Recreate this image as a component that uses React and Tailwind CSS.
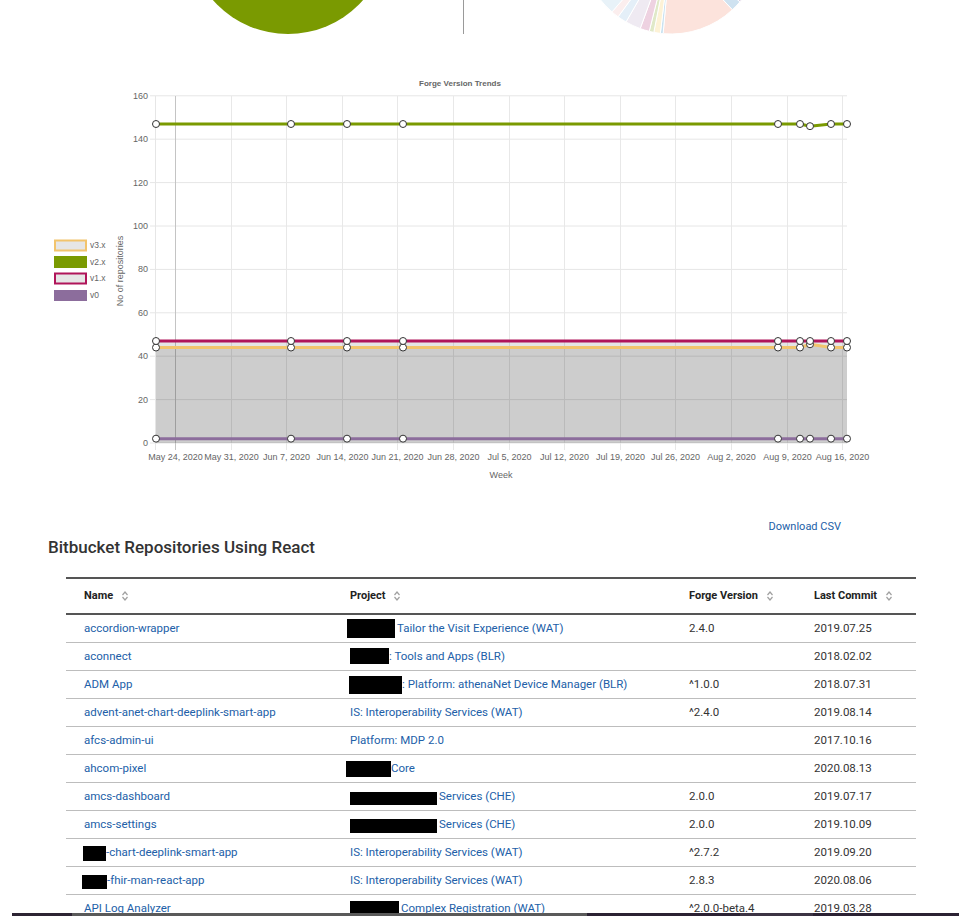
import React from "react";

const xs = [156, 291, 347, 403, 778, 800, 810, 831, 847];
const Y = (v) => 443 - v * 2.17;

const series = [
  { label: "v3.x", color: "#f2c46d", values: [44, 44, 44, 44, 44, 44, 45.5, 44, 44] },
  { label: "v2.x", color: "#7a9a01", values: [147, 147, 147, 147, 147, 147, 146, 147, 147] },
  { label: "v1.x", color: "#b0155a", values: [47, 47, 47, 47, 47, 47, 47, 47, 47] },
  { label: "v0", color: "#8c6d9c", values: [2, 2, 2, 2, 2, 2, 2, 2, 2] },
];

const weeks = [
  "May 24, 2020",
  "May 31, 2020",
  "Jun 7, 2020",
  "Jun 14, 2020",
  "Jun 21, 2020",
  "Jun 28, 2020",
  "Jul 5, 2020",
  "Jul 12, 2020",
  "Jul 19, 2020",
  "Jul 26, 2020",
  "Aug 2, 2020",
  "Aug 9, 2020",
  "Aug 16, 2020",
];

const chartFont = "'Liberation Sans', Arial, Helvetica, sans-serif";

function linePath(values) {
  return values.map((v, i) => `${i === 0 ? "M" : "L"}${xs[i]},${Y(v)}`).join(" ");
}

function areaPath(values) {
  return `${linePath(values)} L${xs[xs.length - 1]},${Y(0)} L${xs[0]},${Y(0)} Z`;
}

// pie slice between two angles (degrees, svg orientation)
function slice(cx, cy, r, a0, a1) {
  const rad = (a) => (a * Math.PI) / 180;
  const x0 = cx + r * Math.cos(rad(a0));
  const y0 = cy + r * Math.sin(rad(a0));
  const x1 = cx + r * Math.cos(rad(a1));
  const y1 = cy + r * Math.sin(rad(a1));
  const large = a1 - a0 > 180 ? 1 : 0;
  return `M${cx},${cy} L${x0},${y0} A${r},${r} 0 ${large} 1 ${x1},${y1} Z`;
}

const pieSlices = [
  [0, 30, "#e4a9c6"],
  [30, 40, "#d9cde3"],
  [40, 47, "#cfe2f0"],
  [47, 95, "#fce3dc"],
  [95, 96.8, "#c9e2f1"],
  [96.8, 101, "#fdf2d6"],
  [101, 104, "#e0e9c8"],
  [104, 110, "#eed2e1"],
  [110, 120, "#efeaf2"],
  [120, 126, "#e4eff8"],
  [126, 131, "#fbeeee"],
  [131, 180, "#e8f2f8"],
];

function TopPies() {
  return (
    <svg width="959" height="35" viewBox="0 0 959 35" className="block">
      <circle cx="288" cy="-66" r="100" fill="#7a9a01" />
      <line x1="463.5" y1="0" x2="463.5" y2="34" stroke="#9a9a9a" strokeWidth="1" />
      {pieSlices.map(([a0, a1, c], i) => (
        <path key={i} d={slice(671, -56, 90, a0, a1)} fill={c} stroke="#fff" strokeWidth="1" />
      ))}
    </svg>
  );
}

function TrendChart() {
  return (
    <svg width="959" height="455" viewBox="0 35 959 455" className="block" fontFamily={chartFont}>
      <text x="460" y="86" textAnchor="middle" fontSize="8" fontWeight="bold" fill="#666">
        Forge Version Trends
      </text>

      {/* horizontal grid + y labels */}
      {[0, 20, 40, 60, 80, 100, 120, 140, 160].map((v) => (
        <g key={v}>
          <line x1="150" y1={Y(v)} x2="847" y2={Y(v)} stroke="#e6e6e6" strokeWidth="1" />
          <text x="148" y={Y(v) + 3} textAnchor="end" fontSize="9" fill="#666">
            {v}
          </text>
        </g>
      ))}
      <line x1="155.5" y1="96" x2="155.5" y2="450" stroke="#e6e6e6" strokeWidth="1" />

      {/* vertical grid + x labels */}
      {weeks.map((w, i) => {
        const x = Math.round(175 + i * 55.6) + 0.5;
        return (
          <g key={w}>
            <line x1={x} y1="96" x2={x} y2="450" stroke={i === 0 ? "#c4c4c4" : "#e8e8e8"} strokeWidth="1" />
            <text x={x} y="460" textAnchor="middle" fontSize="9" fill="#666">
              {w}
            </text>
          </g>
        );
      })}
      <text x="501" y="478" textAnchor="middle" fontSize="9" fill="#666">
        Week
      </text>
      <text x="123" y="271" textAnchor="middle" fontSize="9" fill="#666" transform="rotate(-90 123 271)">
        No of repositories
      </text>

      {/* fills */}
      <path d={areaPath(series[2].values)} fill="rgba(0,0,0,0.1)" />
      <path d={areaPath(series[0].values)} fill="rgba(0,0,0,0.1)" />

      {/* lines */}
      {series.map((s) => (
        <path key={s.label} d={linePath(s.values)} fill="none" stroke={s.color} strokeWidth="3" strokeLinejoin="round" />
      ))}
      {series.map((s) =>
        s.values.map((v, i) => (
          <circle key={s.label + i} cx={xs[i]} cy={Y(v)} r="3.5" fill="#fff" stroke="#333" strokeWidth="1" />
        ))
      )}

      {/* legend */}
      <rect x="55" y="240.5" width="31" height="10" fill="#e6e6e6" stroke="#f2c46d" strokeWidth="2" />
      <text x="90" y="248" fontSize="8.5" fill="#666">v3.x</text>
      <rect x="54" y="256" width="33" height="12" fill="#7a9a01" />
      <text x="90" y="265" fontSize="8.5" fill="#666">v2.x</text>
      <rect x="55" y="273.5" width="31" height="10" fill="#e6e6e6" stroke="#b0155a" strokeWidth="2" />
      <text x="90" y="281" fontSize="8.5" fill="#666">v1.x</text>
      <rect x="54" y="290" width="33" height="11" fill="#8c6d9c" />
      <text x="90" y="298" fontSize="8.5" fill="#666">v0</text>
    </svg>
  );
}

function SortIcon() {
  return (
    <svg width="8" height="12" viewBox="0 0 8 12" className="ml-[8px] shrink-0">
      <polyline points="1.5,5 4,2 6.5,5" fill="none" stroke="#a0a0a0" strokeWidth="1.2" />
      <polyline points="1.5,7 4,10 6.5,7" fill="none" stroke="#a0a0a0" strokeWidth="1.2" />
    </svg>
  );
}

const Box = ({ className }) => <span className={`inline-block shrink-0 bg-black ${className}`} />;

const rows = [
  {
    name: "accordion-wrapper",
    project: (
      <>
        <Box className="w-[48px] h-[19px] -ml-[3px]" />
        <span className="ml-[2px]">Tailor the Visit Experience (WAT)</span>
      </>
    ),
    version: "2.4.0",
    date: "2019.07.25",
  },
  {
    name: "aconnect",
    project: (
      <>
        <Box className="w-[39px] h-[16px] -mt-[1px]" />
        <span>: Tools and Apps (BLR)</span>
      </>
    ),
    version: "",
    date: "2018.02.02",
  },
  {
    name: "ADM App",
    project: (
      <>
        <Box className="w-[53px] h-[18px] -ml-[1px]" />
        <span>: Platform: athenaNet Device Manager (BLR)</span>
      </>
    ),
    version: "^1.0.0",
    date: "2018.07.31",
  },
  {
    name: "advent-anet-chart-deeplink-smart-app",
    project: <span>IS: Interoperability Services (WAT)</span>,
    version: "^2.4.0",
    date: "2019.08.14",
  },
  {
    name: "afcs-admin-ui",
    project: <span>Platform: MDP 2.0</span>,
    version: "",
    date: "2017.10.16",
  },
  {
    name: "ahcom-pixel",
    project: (
      <>
        <Box className="w-[45px] h-[16px] -ml-[4px]" />
        <span>Core</span>
      </>
    ),
    version: "",
    date: "2020.08.13",
  },
  {
    name: "amcs-dashboard",
    project: (
      <>
        <Box className="w-[87px] h-[13px] mt-[3px]" />
        <span className="ml-[2px]">Services (CHE)</span>
      </>
    ),
    version: "2.0.0",
    date: "2019.07.17",
  },
  {
    name: "amcs-settings",
    project: (
      <>
        <Box className="w-[87px] h-[14px] mt-[3px]" />
        <span className="ml-[2px]">Services (CHE)</span>
      </>
    ),
    version: "2.0.0",
    date: "2019.10.09",
  },
  {
    name: (
      <>
        <Box className="w-[23px] h-[15px] -ml-[1px] mt-[1px]" />
        <span>-chart-deeplink-smart-app</span>
      </>
    ),
    project: <span>IS: Interoperability Services (WAT)</span>,
    version: "^2.7.2",
    date: "2019.09.20",
  },
  {
    name: (
      <>
        <Box className="w-[25px] h-[14px] -ml-[2px] mt-[3px]" />
        <span>-fhir-man-react-app</span>
      </>
    ),
    project: <span>IS: Interoperability Services (WAT)</span>,
    version: "2.8.3",
    date: "2020.08.06",
  },
  {
    name: "API Log Analyzer",
    project: (
      <>
        <Box className="w-[49px] h-[14px] -mt-[2px]" />
        <span className="ml-[2px]">Complex Registration (WAT)</span>
      </>
    ),
    version: "^2.0.0-beta.4",
    date: "2019.03.28",
  },
];

const cols = "grid grid-cols-[266px_339px_125px_120px]";

function RepoTable() {
  return (
    <div className="ml-[66px] w-[850px] border-t-2 border-[#555]">
      <div className={`${cols} h-[36px] items-center border-b-2 border-[#555] text-[11px] font-bold text-[#222]`}>
        {["Name", "Project", "Forge Version", "Last Commit"].map((h) => (
          <div key={h} className="flex items-center pl-[18px]">
            <span>{h}</span>
            <SortIcon />
          </div>
        ))}
      </div>
      {rows.map((r, i) => (
        <div key={i} className={`${cols} h-[28px] items-center border-b border-[#bdbdbd] text-[11.5px]`}>
          <div className="flex items-center pl-[18px] text-[#2160a8] whitespace-nowrap">{r.name}</div>
          <div className="flex items-center pl-[18px] text-[#2160a8] whitespace-nowrap">{r.project}</div>
          <div className="pl-[18px] text-[#333]">{r.version}</div>
          <div className="pl-[18px] text-[#333]">{r.date}</div>
        </div>
      ))}
    </div>
  );
}

export default function App() {
  return (
    <div className="relative h-[916px] w-[959px] overflow-hidden bg-white font-['Roboto',_'Liberation_Sans',_sans-serif]">
      <TopPies />
      <TrendChart />

      <div className="mt-[30px] flex justify-end pr-[118px]">
        <a className="text-[11px] leading-[14px] text-[#2160a8]">Download CSV</a>
      </div>

      <h2 className="mt-[2px] pl-[48px] text-[17px] font-medium leading-[22px] text-[#333]">
        Bitbucket Repositories Using React
      </h2>

      <div className="mt-[19px]">
        <RepoTable />
      </div>

      {/* strip along the bottom edge of the window */}
      <div className="absolute bottom-0 left-[12px] right-0 flex h-[3px]">
        <div className="w-[60px] bg-[#2d2433]" />
        <div className="w-[515px] bg-[#5a5a5a]" />
        <div className="w-[153px] bg-[#2b2233]" />
        <div className="w-[73px] bg-[#3c3444]" />
        <div className="flex-1 bg-[#2b2233]" />
      </div>
    </div>
  );
}
